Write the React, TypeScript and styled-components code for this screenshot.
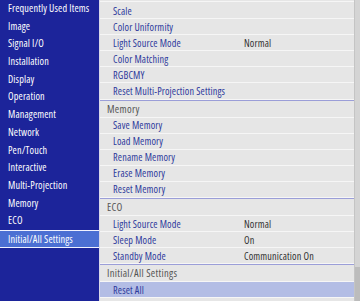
import React from 'react';
import styled, { createGlobalStyle } from 'styled-components';

const GlobalStyle = createGlobalStyle`
  html, body {
    margin: 0;
    padding: 0;
    background: #1c249a;
    font-family: 'Open Sans', 'Noto Sans', sans-serif;
    font-stretch: 87.5%;
  }
`;

interface MenuRow {
  label: string;
  value?: string;
  selected?: boolean;
}

interface MenuGroup {
  title?: string;
  rows: MenuRow[];
}

const sideItems = [
  'Frequently Used Items',
  'Image',
  'Signal I/O',
  'Installation',
  'Display',
  'Operation',
  'Management',
  'Network',
  'Pen/Touch',
  'Interactive',
  'Multi-Projection',
  'Memory',
  'ECO',
  'Initial/All Settings',
];

const groups: MenuGroup[] = [
  {
    rows: [
      { label: 'Scale' },
      { label: 'Color Uniformity' },
      { label: 'Light Source Mode', value: 'Normal' },
      { label: 'Color Matching' },
      { label: 'RGBCMY' },
      { label: 'Reset Multi-Projection Settings' },
    ],
  },
  {
    title: 'Memory',
    rows: [
      { label: 'Save Memory' },
      { label: 'Load Memory' },
      { label: 'Rename Memory' },
      { label: 'Erase Memory' },
      { label: 'Reset Memory' },
    ],
  },
  {
    title: 'ECO',
    rows: [
      { label: 'Light Source Mode', value: 'Normal' },
      { label: 'Sleep Mode', value: 'On' },
      { label: 'Standby Mode', value: 'Communication On' },
    ],
  },
  {
    title: 'Initial/All Settings',
    rows: [{ label: 'Reset All', selected: true }],
  },
];

const App: React.FC = () => {
  return (
    <>
      <GlobalStyle />
      <Screen>
        <Sidebar>
          {sideItems.map((item) => (
            <SideItem key={item} active={item === 'Initial/All Settings'}>
              {item}
            </SideItem>
          ))}
        </Sidebar>
        <Panel>
          <List>
            {groups.map((group, gi) => (
              <Group key={gi} last={gi === groups.length - 1}>
                {group.title && <GroupTitle>{group.title}</GroupTitle>}
                {group.rows.map((row) => (
                  <Row key={row.label} selected={row.selected}>
                    <RowLabel>{row.label}</RowLabel>
                    {row.value && <RowValue>{row.value}</RowValue>}
                  </Row>
                ))}
              </Group>
            ))}
          </List>
          <ScrollTrack>
            <ScrollThumb />
          </ScrollTrack>
        </Panel>
      </Screen>
    </>
  );
};

const Screen = styled.div`
  display: flex;
  width: 360px;
  height: 301px;
  overflow: hidden;
`;

const Sidebar = styled.div`
  width: 99px;
  flex-shrink: 0;
  background-color: #1c249a;
  border-right: 1px solid #d8d8e8;
  display: flex;
  flex-direction: column;
`;

const SideItem = styled.div<{ active?: boolean }>`
  padding-left: 8px;
  font-size: 10.2px;
  letter-spacing: 0.15px;
  font-weight: 500;
  color: #ffffff;
  white-space: nowrap;
  box-sizing: border-box;
  background-color: ${({ active }) => (active ? '#4b6fd3' : 'transparent')};
  border-top: ${({ active }) => (active ? '1px solid #f0f2ff' : 'none')};
  border-bottom: ${({ active }) => (active ? '1px solid #f0f2ff' : 'none')};
  height: ${({ active }) => (active ? '18px' : '17.7px')};
  line-height: ${({ active }) => (active ? '16px' : '17.7px')};
`;

const Panel = styled.div`
  flex: 1;
  display: flex;
  background-color: #e6e6e6;
`;

const List = styled.div`
  flex: 1;
  padding-top: 1px;
`;

const Group = styled.div<{ last?: boolean }>`
  border-bottom: ${({ last }) => (last ? 'none' : '1px solid #9b9ed8')};
  &:first-child {
    border-top: 1px solid #f6f6f6;
    padding-top: 1px;
  }
`;

const GroupTitle = styled.div`
  height: 16px;
  line-height: 16px;
  padding-left: 7px;
  font-size: 10.6px;
  letter-spacing: 0.3px;
  color: #555555;
  border-bottom: 1px solid #f6f6f6;
`;

const Row = styled.div<{ selected?: boolean }>`
  display: flex;
  align-items: center;
  height: 15.1px;
  padding-left: 13px;
  font-size: 10.2px;
  letter-spacing: 0.15px;
  font-weight: 500;
  border-bottom: 1px solid #f6f6f6;
  background-color: ${({ selected }) => (selected ? '#b3bde5' : 'transparent')};
`;

const RowLabel = styled.div`
  width: 131px;
  color: #2e3a9c;
  white-space: nowrap;
`;

const RowValue = styled.div`
  color: #333333;
  white-space: nowrap;
`;

const ScrollTrack = styled.div`
  width: 5px;
  background-color: #d4d4d4;
  border-left: 1px solid #c4c4c4;
  display: flex;
  flex-direction: column;
  justify-content: flex-end;
`;

const ScrollThumb = styled.div`
  height: 34px;
  background-color: #bcbcbc;
`;

export default App;
